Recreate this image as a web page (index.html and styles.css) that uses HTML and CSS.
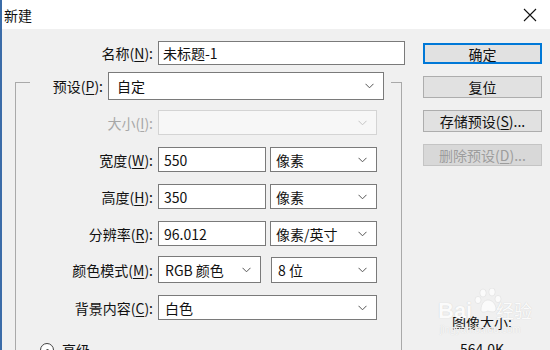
FILE: index.html
```html
<!DOCTYPE html>
<html lang="zh-CN">
<head>
    <meta charset="UTF-8">
    <title>新建</title>
    <link rel="stylesheet" href="styles.css">
</head>
<body>
    <div class="dialog">
        <div class="titlebar">
            <span class="title">新建</span>
            <svg class="close" width="14" height="14" viewBox="0 0 14 14">
                <path d="M1 1 L13 13 M13 1 L1 13" stroke="#111" stroke-width="1.1" fill="none"/>
            </svg>
        </div>

        <div class="content">
            <div class="form">
                <div class="name-row">
                    <span class="lbl name-lbl">名称(<u>N</u>):</span>
                    <span class="field name-field">未标题-1</span>
                </div>

                <fieldset class="group">
                    <legend class="preset">
                        <span class="lbl preset-lbl">预设(<u>P</u>):</span>
                        <span class="field select preset-select">自定<svg class="arrow" width="9" height="6" viewBox="0 0 9 6"><path d="M0.5 0.8 L4.5 4.8 L8.5 0.8" stroke="#555" fill="none"/></svg></span>
                    </legend>

                    <div class="row first">
                        <span class="lbl off">大小(<u>I</u>):</span>
                        <span class="field select disabled full"><svg class="arrow" width="9" height="6" viewBox="0 0 9 6"><path d="M0.5 0.8 L4.5 4.8 L8.5 0.8" stroke="#c4c4c4" fill="none"/></svg></span>
                    </div>
                    <div class="row">
                        <span class="lbl">宽度(<u>W</u>):</span>
                        <span class="field num">550</span>
                        <span class="field select unit">像素<svg class="arrow" width="9" height="6" viewBox="0 0 9 6"><path d="M0.5 0.8 L4.5 4.8 L8.5 0.8" stroke="#555" fill="none"/></svg></span>
                    </div>
                    <div class="row">
                        <span class="lbl">高度(<u>H</u>):</span>
                        <span class="field num">350</span>
                        <span class="field select unit">像素<svg class="arrow" width="9" height="6" viewBox="0 0 9 6"><path d="M0.5 0.8 L4.5 4.8 L8.5 0.8" stroke="#555" fill="none"/></svg></span>
                    </div>
                    <div class="row">
                        <span class="lbl">分辨率(<u>R</u>):</span>
                        <span class="field num">96.012</span>
                        <span class="field select unit">像素/英寸<svg class="arrow" width="9" height="6" viewBox="0 0 9 6"><path d="M0.5 0.8 L4.5 4.8 L8.5 0.8" stroke="#555" fill="none"/></svg></span>
                    </div>
                    <div class="row mode-row">
                        <span class="lbl">颜色模式(<u>M</u>):</span>
                        <span class="field select mode">RGB 颜色<svg class="arrow" width="9" height="6" viewBox="0 0 9 6"><path d="M0.5 0.8 L4.5 4.8 L8.5 0.8" stroke="#555" fill="none"/></svg></span>
                        <span class="field select bits">8 位<svg class="arrow" width="9" height="6" viewBox="0 0 9 6"><path d="M0.5 0.8 L4.5 4.8 L8.5 0.8" stroke="#555" fill="none"/></svg></span>
                    </div>
                    <div class="row">
                        <span class="lbl">背景内容(<u>C</u>):</span>
                        <span class="field select full">白色<svg class="arrow" width="9" height="6" viewBox="0 0 9 6"><path d="M0.5 0.8 L4.5 4.8 L8.5 0.8" stroke="#555" fill="none"/></svg></span>
                    </div>

                    <div class="advanced">
                        <span class="toggle"><svg width="7" height="5" viewBox="0 0 7 5"><path d="M0.5 4.5 L3.5 1 L6.5 4.5" stroke="#333" fill="none"/></svg></span>
                        <span>高级</span>
                    </div>
                </fieldset>
            </div>

            <div class="actions">
                <button class="btn default">确定</button>
                <button class="btn">复位</button>
                <button class="btn">存储预设(<u>S</u>)...</button>
                <button class="btn off">删除预设(<u>D</u>)...</button>

                <div class="size-info">
                    <div>图像大小:</div>
                    <div class="size-value">564.0K</div>
                </div>
            </div>
        </div>

        <div class="watermark">
            <svg class="paw" width="30" height="26" viewBox="0 0 30 26">
                <ellipse cx="9" cy="5" rx="3.2" ry="4" />
                <ellipse cx="18" cy="4" rx="3.2" ry="4" />
                <ellipse cx="4" cy="12" rx="3" ry="3.6" />
                <ellipse cx="24" cy="11" rx="3" ry="3.6" />
                <path d="M7 22 C7 15 11 12 14 12 C18 12 22 16 22 21 C22 25 17 24 14 23 C11 24 7 25 7 22 Z" />
            </svg>
            <span class="wm-bai">Bai</span>
            <span class="wm-jy">经验</span>
            <span class="wm-url">jingyan.baidu.com</span>
        </div>
    </div>
</body>
</html>
```

FILE: styles.css
```css
body {
    margin: 0;
    background-color: #f0f0f0;
    font-family: "Noto Sans CJK SC", "Noto Sans", sans-serif;
    font-size: 14px;
    color: #111;
}
.dialog {
    position: relative;
    width: 548px;
    height: 350px;
    overflow: hidden;
    border-left: 2px solid #3b6ca8;
    background-color: #f0f0f0;
}
.titlebar {
    height: 29px;
    background-color: #fff;
    display: flex;
    align-items: center;
    justify-content: space-between;
    padding: 0 13px 0 2px;
}
.title {
    font-size: 14px;
    line-height: 20px;
}
.close {
    margin-top: 1px;
}
.content {
    display: flex;
}
.form {
    width: 413px;
    padding-top: 12px;
}
.lbl {
    text-align: right;
    white-space: nowrap;
}
.lbl u,
.btn u {
    text-decoration-thickness: 1px;
    text-underline-offset: 2px;
}
.field {
    box-sizing: border-box;
    display: flex;
    align-items: center;
    background-color: #fff;
    border: 1px solid #7a7a7a;
    padding: 0 6px;
    white-space: nowrap;
}
.select {
    justify-content: space-between;
    padding-right: 9px;
}
.arrow {
    flex: none;
}
.name-row {
    display: flex;
    align-items: center;
    gap: 5px;
    height: 24px;
}
.name-lbl {
    width: 151px;
}
.name-field {
    width: 247px;
    height: 24px;
    padding-left: 4px;
}

.group {
    margin: 7px 0 0 13px;
    padding: 0;
    width: 387px;
    height: 320px;
    box-sizing: border-box;
    border: 1px solid #a9a9a9;
    border-bottom: none;
}
.preset {
    margin-left: 14px;
    padding: 0;
    width: 361px;
    height: 20px;
    display: flex;
    align-items: flex-start;
    gap: 5px;
}
.preset-lbl {
    width: 73px;
    line-height: 28px;
}
.preset-select {
    width: 276px;
    height: 28px;
    padding-left: 8px;
}

.row {
    display: flex;
    align-items: center;
    gap: 4px;
    height: 25px;
    margin-top: 12px;
}
.row.first {
    margin-top: 18px;
}
.row .lbl {
    width: 137px;
    margin-right: 1px;
}
.row .field {
    height: 25px;
}
.full {
    width: 219px;
}
.num {
    width: 108px;
    padding-left: 5px;
}
.unit {
    width: 107px;
    padding-left: 5px;
}
.mode-row {
    gap: 10px;
    height: 27px;
    margin-top: 10px;
}
.mode-row .lbl {
    margin-right: -5px;
}
.row .mode {
    width: 103px;
    height: 27px;
}
.row .bits {
    width: 106px;
    height: 26px;
}
.lbl.off {
    color: #a8a8a8;
}
.disabled {
    background-color: #f7f7f7;
    border-color: #d4d4d4;
    justify-content: flex-end;
}

.advanced {
    display: flex;
    align-items: center;
    gap: 8px;
    margin: 20px 0 0 24px;
}
.toggle {
    width: 12px;
    height: 12px;
    border: 1px solid #444;
    border-radius: 50%;
    background-color: #fff;
    display: flex;
    align-items: center;
    justify-content: center;
}

.actions {
    margin-left: 8px;
    width: 119px;
    padding-top: 14px;
    display: flex;
    flex-direction: column;
    gap: 12px;
}
.btn {
    box-sizing: border-box;
    height: 22px;
    padding: 0;
    background-color: #e1e1e1;
    border: 1px solid #adadad;
    font-family: "Noto Sans CJK SC", "Noto Sans", sans-serif;
    font-size: 14px;
    line-height: 18px;
    color: #111;
}
.btn.default {
    border: 2px solid #0078d7;
    height: 21px;
    line-height: 16px;
}
.btn.off {
    background-color: #d8d8d8;
    border-color: #c4c4c4;
    color: #9d9d9d;
}
.size-info {
    margin-top: 134px;
    padding-left: 29px;
    line-height: 20px;
}
.size-value {
    margin-top: 7px;
    padding-left: 8px;
}

.watermark {
    position: absolute;
    left: 436px;
    top: 288px;
    width: 110px;
    height: 50px;
    color: #fbfbfb;
    pointer-events: none;
}
.paw {
    position: absolute;
    left: 36px;
    top: 0;
    fill: #fbfbfb;
    stroke: #dedede;
    stroke-width: 0.6;
}
.wm-bai {
    position: absolute;
    left: 0;
    top: 10px;
    font-family: "Liberation Sans", Arial, sans-serif;
    font-size: 22px;
    font-weight: bold;
    text-shadow: 0 0 1px #c9c9c9;
}
.wm-jy {
    position: absolute;
    left: 58px;
    top: 9px;
    font-size: 18px;
    text-shadow: 0 0 1px #c9c9c9;
}
.wm-url {
    position: absolute;
    left: 2px;
    top: 36px;
    font-family: "Liberation Sans", Arial, sans-serif;
    font-size: 10px;
    color: #f7f7f7;
    text-shadow: 0 0 1px #cfcfcf;
}
```
